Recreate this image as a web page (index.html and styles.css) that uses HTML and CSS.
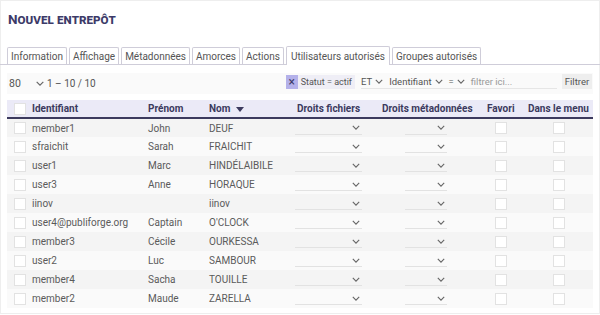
FILE: index.html
```html
<!DOCTYPE html>
<html lang="fr">
<head>
  <meta charset="UTF-8" />
  <title>Nouvel entrepôt</title>
  <link rel="stylesheet" href="styles.css">
</head>
<body>
  <div class="page">
    <h1>Nouvel entrepôt</h1>

    <ul class="tabs">
      <li>Information</li>
      <li>Affichage</li>
      <li>Métadonnées</li>
      <li>Amorces</li>
      <li>Actions</li>
      <li class="active">Utilisateurs autorisés</li>
      <li>Groupes autorisés</li>
    </ul>

    <div class="toolbar">
      <div class="pager">
        <span class="page-size">80 <svg class="chev" viewBox="0 0 10 6"><path d="M1 1l4 4 4-4"/></svg></span>
        <span>1 – 10 / 10</span>
      </div>
      <div class="filters">
        <span class="chip-close">×</span>
        <span class="chip">Statut = actif</span>
        <div class="filter-input">
          <span class="opt">ET <svg class="chev" viewBox="0 0 10 6"><path d="M1 1l4 4 4-4"/></svg></span>
          <span class="opt">Identifiant <svg class="chev" viewBox="0 0 10 6"><path d="M1 1l4 4 4-4"/></svg></span>
          <span class="opt">= <svg class="chev" viewBox="0 0 10 6"><path d="M1 1l4 4 4-4"/></svg></span>
          <span class="placeholder">filtrer ici...</span>
        </div>
        <button type="button">Filtrer</button>
      </div>
    </div>

    <table>
      <colgroup>
        <col style="width:23px"><col style="width:116px"><col style="width:61px"><col style="width:88px">
        <col style="width:85px"><col style="width:105px"><col style="width:41px"><col style="width:67px">
      </colgroup>
      <thead>
        <tr>
          <th><span class="box"></span></th>
          <th>Identifiant</th>
          <th>Prénom</th>
          <th>Nom <svg class="sort" viewBox="0 0 8 5"><path d="M0 0h8L4 5z"/></svg></th>
          <th>Droits fichiers</th>
          <th>Droits métadonnées</th>
          <th>Favori</th>
          <th>Dans le menu</th>
        </tr>
      </thead>
      <tbody id="rows"></tbody>
    </table>
  </div>

  <script>
    const users = [
      ['member1', 'John', 'DEUF'],
      ['sfraichit', 'Sarah', 'FRAICHIT'],
      ['user1', 'Marc', 'HINDÉLAIBILE'],
      ['user3', 'Anne', 'HORAQUE'],
      ['iinov', '', 'iinov'],
      ['user4@publiforge.org', 'Captain', "O'CLOCK"],
      ['member3', 'Cécile', 'OURKESSA'],
      ['user2', 'Luc', 'SAMBOUR'],
      ['member4', 'Sacha', 'TOUILLE'],
      ['member2', 'Maude', 'ZARELLA']
    ];
    const chev = '<svg class="chev" viewBox="0 0 10 6"><path d="M1 1l4 4 4-4"/></svg>';
    const tbody = document.getElementById('rows');

    users.forEach(function(u) {
      const tr = document.createElement('tr');
      tr.innerHTML =
        '<td><span class="box"></span></td>' +
        '<td>' + u[0] + '</td>' +
        '<td>' + u[1] + '</td>' +
        '<td>' + u[2] + '</td>' +
        '<td><span class="select files">' + chev + '</span></td>' +
        '<td><span class="select meta">' + chev + '</span></td>' +
        '<td><span class="box fav"></span></td>' +
        '<td><span class="box menu"></span></td>';
      tbody.appendChild(tr);
    });
  </script>
</body>
</html>
```

FILE: styles.css
```css
* {
  box-sizing: border-box;
}

body {
  margin: 0;
  font-family: Roboto, "Liberation Sans", sans-serif;
  color: #5a5a5a;
  background: #fff;
}

.page {
  height: 314px;
  border: 1px solid #eee;
  padding: 9px 6px 0;
}

h1 {
  margin: 0 0 0 1px;
  font-size: 13.5px;
  line-height: 18px;
  font-weight: bold;
  font-variant: small-caps;
  color: #3c3a68;
}

.tabs {
  list-style: none;
  display: flex;
  align-items: flex-end;
  margin: 18px -7px 0;
  padding: 0 0 0 7px;
  border-bottom: 1px solid #cfcdd9;
  height: 19px;
}

.tabs li {
  font-size: 10px;
  line-height: 15px;
  padding: 1px 3px 0;
  height: 17px;
  margin-right: 2px;
  border: 1px solid #cfcdd9;
  border-bottom: none;
  border-radius: 2px 2px 0 0;
  color: #555;
  background: #fff;
}

.tabs li.active {
  height: 19px;
  padding: 2px 4px 0;
  margin-bottom: -1px;
}

.toolbar {
  display: flex;
  justify-content: space-between;
  align-items: flex-start;
  margin-top: 8px;
  height: 21px;
  background: #fafafa;
  font-size: 9.5px;
}

.pager {
  display: flex;
  align-items: center;
  height: 21px;
  padding-left: 2px;
  font-size: 10px;
  color: #555;
}

.page-size {
  display: inline-flex;
  align-items: center;
  width: 38px;
  font-size: 10.5px;
}

.page-size .chev {
  margin-left: 14px;
  width: 10px;
}

.chev {
  width: 8px;
  height: 5px;
  fill: none;
  stroke: #666;
  stroke-width: 1.4;
}

.filters {
  display: flex;
  align-items: center;
  margin-top: 1px;
  padding-right: 1px;
  height: 15px;
}

.chip-close {
  width: 12px;
  height: 14px;
  background: #b4b1ea;
  color: #3c3a68;
  text-align: center;
  line-height: 14px;
  font-size: 12px;
}

.chip {
  height: 14px;
  line-height: 14px;
  padding: 0 3px;
  font-size: 9px;
  background: #efeef6;
  color: #555;
  white-space: nowrap;
}

.filter-input {
  display: flex;
  align-items: center;
  width: 196px;
  height: 15px;
  margin-left: 6px;
  border-bottom: 1px solid #e6e6e6;
  color: #555;
}

.opt {
  display: inline-flex;
  align-items: center;
  margin-right: 6px;
}

.opt .chev {
  margin-left: 3px;
}

.placeholder {
  color: #999;
}

.filters button {
  margin-left: 5px;
  width: 30px;
  height: 15px;
  padding: 0;
  border: none;
  background: #eee;
  color: #555;
  font-family: inherit;
  font-size: 9.5px;
}

table {
  margin-top: 6px;
  width: 586px;
  border-collapse: collapse;
  table-layout: fixed;
}

th {
  height: 18px;
  padding: 0 2px;
  text-align: left;
  font-size: 10px;
  font-weight: bold;
  color: #3c3a5e;
  background: #ebeaf7;
  border-bottom: 2px solid #3c3a5e;
  white-space: nowrap;
}

td {
  height: 19px;
  padding: 0 2px;
  font-size: 10px;
  color: #5a5a5a;
  white-space: nowrap;
}

tbody tr:nth-child(odd) {
  background: #f4f4f4;
}

tbody tr:nth-child(even) {
  background: #fafafa;
}

th:first-child,
td:first-child {
  padding-left: 7px;
}

td:nth-child(5),
td:nth-child(6) {
  padding: 0;
}

.sort {
  width: 8px;
  height: 5px;
  margin-left: 3px;
  fill: #3c3a5e;
  vertical-align: middle;
}

.box {
  display: block;
  width: 12px;
  height: 12px;
  border: 1px solid #e2e2e2;
  background: #fff;
}

.box.fav {
  margin-left: 8px;
}

.box.menu {
  margin-left: 25px;
}

.select {
  display: flex;
  justify-content: flex-end;
  align-items: center;
  height: 13px;
  border-bottom: 1px solid #e2e2e2;
  padding-right: 2px;
}

.select.files {
  width: 67px;
}

.select.meta {
  width: 42px;
  margin-left: 25px;
}
```
